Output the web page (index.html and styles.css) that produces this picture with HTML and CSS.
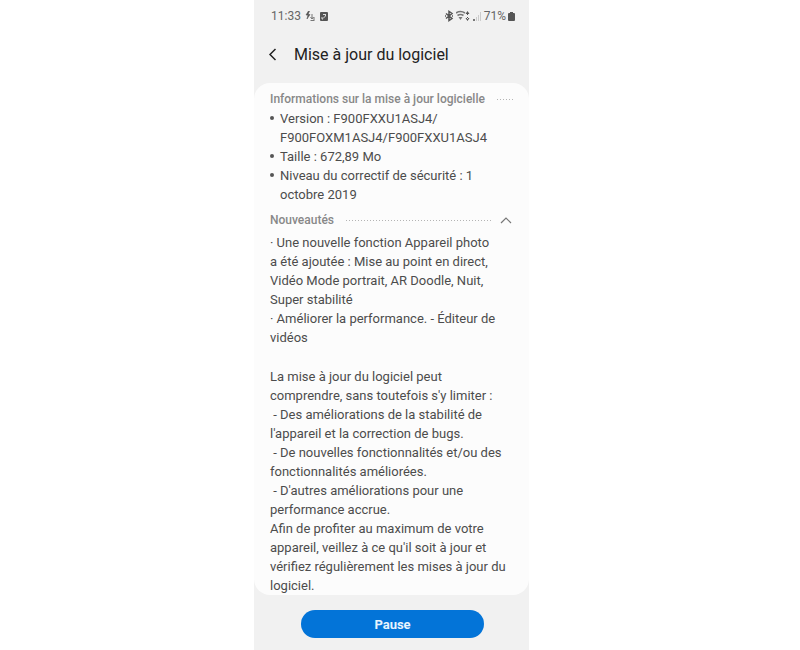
FILE: index.html
```html
<!DOCTYPE html>
<html lang="fr">
    <head>
        <meta charset="utf-8">
        <meta name="viewport" content="width=device-width, initial-scale=1">
        <title>Mise à jour du logiciel</title>
        <link rel="stylesheet" href="styles.css">
    </head>
    <body>
        <div class="phone">
            <div class="statusbar">
                <span class="clock">11:33</span>
                <svg width="11" height="10" viewBox="0 0 11 10">
                    <path d="M3.500 0L1 4h2L2 8l3-4.500H3L4.500 0z" fill="#555" stroke="#555" stroke-width=".6"/>
                    <path d="M7 3v5M5.500 6L7 8l1.500-2M5.500 9.500h4M9 6v3" fill="none" stroke="#777"/>
                </svg>
                <svg width="9" height="10" viewBox="0 0 9 10">
                    <rect x="0" y="1" width="8" height="9" rx="1" fill="#555"/>
                    <path d="M3 3.500h3M5.500 3v2L3 7.500M2 6v2h1" fill="none" stroke="#ddd"/>
                </svg>
                <div class="signals">
                    <svg width="10" height="12" viewBox="0 0 10 12">
                        <path d="M2 3.500l6 5L5 10.500V1.500l3 2-6 5M1 6h1M8 6h1" fill="none" stroke="#555" stroke-width="1.500"/>
                    </svg>
                    <svg width="14" height="12" viewBox="0 0 14 12">
                        <path d="M0 3Q4.500 0 9 3M1.500 5.500q3-2 6 0" fill="none" stroke="#777" stroke-width="1.700"/>
                        <path d="M2.500 7h4L4.500 10z" fill="#777"/>
                        <path d="M11.500 1l2 3h-4zM11.500 11l2-3h-4zM11 3h1v2h-1zM11 7h1v2h-1z" fill="#555"/>
                    </svg>
                    <svg width="10" height="12" viewBox="0 0 10 12">
                        <path d="M1 9h2v2H1z" fill="#777"/>
                        <path d="M4 7h1v4H4zM6 5h1v6H6zM8 2h1v9H8z" fill="#ccc"/>
                    </svg>
                    <span>71%</span>
                    <svg width="7" height="9" viewBox="0 0 7 9">
                        <path d="M2 0h3v1h1q1 0 1 1v6q0 1-1 1H1q-1 0-1-1V2q0-1 1-1h1z" fill="#555"/>
                    </svg>
                </div>
            </div>

            <header class="titlebar">
                <button class="back" type="button" aria-label="Retour">
                    <svg width="9" height="13" viewBox="0 0 9 13">
                        <path d="M7.500 1L2 6.500 7.500 12" fill="none" stroke="#222" stroke-width="1.500"/>
                    </svg>
                </button>
                <h1>Mise à jour du logiciel</h1>
            </header>

            <main class="card">
                <div class="section">
                    <h2>Informations sur la mise à jour logicielle</h2>
                    <span class="dots"></span>
                </div>
                <ul class="infos">
                    <li>Version : F900FXXU1ASJ4/<br>F900FOXM1ASJ4/F900FXXU1ASJ4</li>
                    <li>Taille : 672,89 Mo</li>
                    <li>Niveau du correctif de sécurité : 1<br>octobre 2019</li>
                </ul>

                <div class="section news">
                    <h2>Nouveautés</h2>
                    <span class="dots"></span>
                    <button class="toggle" type="button" aria-label="Réduire">
                        <svg width="12" height="7" viewBox="0 0 12 7">
                            <path d="M1 6l5-5 5 5" fill="none" stroke="#777" stroke-width="1.200"/>
                        </svg>
                    </button>
                </div>
                <div class="notes">
                    <p>· Une nouvelle fonction Appareil photo<br>a été ajoutée : Mise au point en direct,<br>Vidéo Mode portrait, AR Doodle, Nuit,<br>Super stabilité<br>· Améliorer la performance. - Éditeur de<br>vidéos</p>
                    <p class="intro">La mise à jour du logiciel peut<br>comprendre, sans toutefois s'y limiter :</p>
                    <p>&nbsp;- Des améliorations de la stabilité de<br>l'appareil et la correction de bugs.<br>&nbsp;- De nouvelles fonctionnalités et/ou des<br>fonctionnalités améliorées.<br>&nbsp;- D'autres améliorations pour une<br>performance accrue.</p>
                    <p>Afin de profiter au maximum de votre<br>appareil, veillez à ce qu'il soit à jour et<br>vérifiez régulièrement les mises à jour du<br>logiciel.</p>
                </div>
            </main>

            <footer class="actions">
                <button class="pause" type="button">Pause</button>
            </footer>
        </div>
    </body>
</html>
```

FILE: styles.css
```css
body {
    margin: 0;
    padding-right: 17px;
    background: #fff;
    font-family: Roboto, sans-serif;
    color: #4c4c4c;
}

button {
    border: none;
    padding: 0;
    background: none;
    font-family: inherit;
    cursor: pointer;
}

svg {
    display: block;
}

h1, h2, p, ul {
    margin: 0;
}

.phone {
    display: flex;
    flex-direction: column;
    box-sizing: border-box;
    max-width: 275px;
    min-height: 100vh;
    margin: 0 auto;
    background: #f1f1f1;
}

.statusbar {
    display: flex;
    align-items: center;
    gap: 4px;
    height: 32px;
    padding: 0 14px 0 17px;
    font-size: 12px;
    color: #666;
}

.signals {
    display: flex;
    align-items: center;
    gap: 2px;
    margin-left: auto;
}

/* title and back arrow */
.titlebar {
    display: flex;
    align-items: center;
    gap: 17px;
    height: 44px;
    padding: 0 14px;
    margin-bottom: 7px;
}

h1 {
    font-size: 16px;
    font-weight: normal;
    color: #222;
}

.card {
    padding: 7px 14px 0 16px;
    border-radius: 16px;
    background: #fcfcfc;
    font-size: 13px;
    line-height: 19px;
}

.section {
    display: flex;
    align-items: center;
    gap: 12px;
}

.section.news {
    margin: 7px 3px 3px 0;
}

h2 {
    font-size: 12px;
    font-weight: 500;
    color: #888;
}

.dots {
    flex: 1;
    height: 1px;
    background: repeating-linear-gradient(to right, #b4b4b4 0, #b4b4b4 1px, transparent 1px, transparent 3px);
}

.toggle {
    margin-left: -4px;
}

.infos {
    padding: 0 0 0 10px;
    list-style: none;
}

.infos li::before {
    content: "";
    float: left;
    width: 4px;
    height: 4px;
    margin: 7px 0 0 -10px;
    border-radius: 2px;
    background: #555;
}

/* blank line between the news and the general text */
.notes .intro {
    margin-top: 20px;
}

.actions {
    display: flex;
    justify-content: center;
    padding: 15px 0 12px 2px;
}

.pause {
    width: 67%;
    height: 28px;
    border-radius: 14px;
    background: #0374d8;
    font-size: 13px;
    font-weight: bold;
    color: #e8f4ff;
}
```
